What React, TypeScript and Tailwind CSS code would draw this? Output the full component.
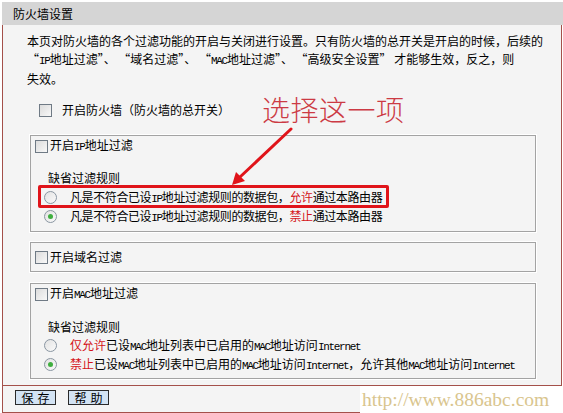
import React from "react";

const CJK = "font-['SimSun','Noto_Sans_CJK_SC',sans-serif]";

function Mono({ children }: { children: React.ReactNode }) {
  return <span className="font-['Liberation_Mono',monospace] text-[11px] tracking-[-1.3px]">{children}</span>;
}

function Checkbox() {
  return (
    <span className="inline-block w-[13px] h-[13px] border border-[#6f7a85] bg-gradient-to-br from-[#dcdcdc] to-[#f8f8f8] shrink-0" />
  );
}

function Radio({ checked }: { checked?: boolean }) {
  return (
    <span className="relative inline-flex items-center justify-center w-[13px] h-[13px] rounded-full border border-[#8a96a2] bg-gradient-to-br from-[#e2e2e2] to-[#fafafa] shrink-0">
      {checked && <span className="w-[5px] h-[5px] rounded-full bg-[#3fae3f]" />}
    </span>
  );
}

function Box({ className, children }: { className?: string; children: React.ReactNode }) {
  return (
    <div
      className={
        "ml-[27px] w-[506px] border border-[#a3a3a3] shadow-[0_0_0_1px_#ffffff] " + (className ?? "")
      }
    >
      {children}
    </div>
  );
}

export default function App() {
  return (
    <div className={"relative w-[563px] h-[413px] bg-white overflow-hidden text-[12px] text-black " + CJK}>
      <div className="pl-[2px] pt-[2px]">
        <div className="h-[23px] bg-[#d5d5d5] flex items-center pl-[11px]">防火墙设置</div>
        <div className="w-[560px] border-x border-b border-[#a4504a] bg-[#f4f4f4]">
          <div className="pt-[7px] pl-[24px] leading-[18px]">
            <div>本页对防火墙的各个过滤功能的开启与关闭进行设置。只有防火墙的总开关是开启的时候，后续的</div>
            <div>
              “<Mono>IP</Mono>地址过滤”、 “域名过滤”、 “<Mono>MAC</Mono>地址过滤”、 “高级安全设置” 才能够生效，反之，则
            </div>
            <div>失效。</div>
          </div>

          <div className="mt-[13px] ml-[36px] h-[18px] flex items-center gap-[10px]">
            <Checkbox />
            <span>开启防火墙（防火墙的总开关）</span>
          </div>

          <Box className="mt-[16px] h-[97px]">
            <div className="pt-[1px] pl-[4px] h-[19px] flex items-center gap-[2px]">
              <Checkbox />
              <span>
                开启<Mono>IP</Mono>地址过滤
              </span>
            </div>
            <div className="mt-[14px] pl-[17px] h-[18px] flex items-center">缺省过滤规则</div>
            <div className="mt-[1px] pl-[13px] h-[19px] flex items-center gap-[13px] tracking-[-0.4px]">
              <Radio />
              <span>
                凡是不符合已设<Mono>IP</Mono>地址过滤规则的数据包，<span className="text-[#d4141a]">允许</span>通过本路由器
              </span>
            </div>
            <div className="pl-[13px] h-[19px] flex items-center gap-[13px] tracking-[-0.4px]">
              <Radio checked />
              <span>
                凡是不符合已设<Mono>IP</Mono>地址过滤规则的数据包，<span className="text-[#d4141a]">禁止</span>通过本路由器
              </span>
            </div>
          </Box>

          <Box className="mt-[10px] h-[30px] flex items-center pl-[4px] gap-[2px]">
            <Checkbox />
            <span>开启域名过滤</span>
          </Box>

          <Box className="mt-[11px] h-[96px]">
            <div className="pl-[4px] h-[20px] flex items-center gap-[2px]">
              <Checkbox />
              <span>
                开启<Mono>MAC</Mono>地址过滤
              </span>
            </div>
            <div className="mt-[14px] pl-[17px] h-[18px] flex items-center">缺省过滤规则</div>
            <div className="pl-[13px] h-[19px] flex items-center gap-[13px]">
              <Radio />
              <span>
                <span className="text-[#d4141a]">仅允许</span>已设<Mono>MAC</Mono>地址列表中已启用的<Mono>MAC</Mono>地址访问
                <Mono>Internet</Mono>
              </span>
            </div>
            <div className="pl-[13px] h-[19px] flex items-center gap-[13px]">
              <Radio checked />
              <span>
                <span className="text-[#d4141a]">禁止</span>已设<Mono>MAC</Mono>地址列表中已启用的<Mono>MAC</Mono>地址访问
                <Mono>Internet</Mono>，允许其他<Mono>MAC</Mono>地址访问<Mono>Internet</Mono>
              </span>
            </div>
          </Box>

          <div className="mt-[6px] border-t border-[#a4504a] pt-[4px] pb-[7px] pl-[12px] flex gap-[12px]">
            <button className="h-[15px] w-[41px] border border-[#2a2a2a] bg-[#d3e3f3] flex items-center justify-center leading-none tracking-[4px] pl-[4px]">
              保存
            </button>
            <button className="h-[15px] w-[41px] border border-[#2a2a2a] bg-[#d3e3f3] flex items-center justify-center leading-none tracking-[4px] pl-[4px]">
              帮助
            </button>
          </div>
        </div>
      </div>

      {/* annotation overlay */}
      <div className="absolute left-[262px] top-[93px] text-[28px] leading-[32px] text-[#cc3a44] font-light tracking-[0.5px]">
        选择这一项
      </div>
      <svg className="absolute left-0 top-0" width="563" height="413" viewBox="0 0 563 413">
        <line x1="291" y1="129" x2="240" y2="177" stroke="#e0141a" strokeWidth="3" strokeLinecap="round" />
        <polygon points="232,185 236,172 245,181" fill="#e0141a" />
      </svg>
      <div className="absolute left-[38px] top-[185px] w-[351px] h-[23px] border-[3px] border-[#e0141a] rounded-[2px]" />

      {/* watermark */}
      <div className="absolute left-[360px] top-[386px] right-0 bottom-0 bg-white flex items-center pl-[2px] font-['Liberation_Serif',serif] text-[19.5px] text-[#d9c58e] whitespace-nowrap">
        http://www.886abc.com
      </div>
    </div>
  );
}
